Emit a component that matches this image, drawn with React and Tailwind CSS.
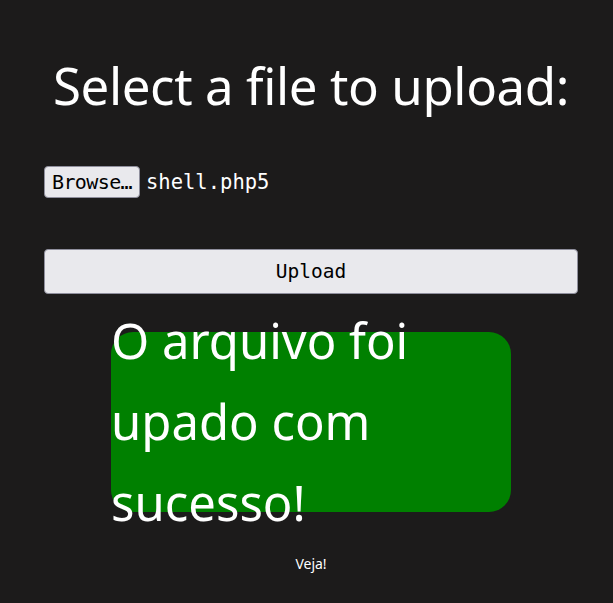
export default function App() {
  return (
    <div className="min-h-screen bg-[#1c1b1b] text-white font-['Noto_Sans',sans-serif] overflow-hidden">
      <div className="flex flex-col items-center pt-[54px] pl-[9px]">
        <h1 className="text-[51px] leading-[62px] tracking-[-0.4px] whitespace-nowrap">Select a file to upload:</h1>

        <div className="w-[534px] mt-[50px] flex flex-col">
          <div className="flex items-center gap-[6px] font-['DejaVu_Sans_Mono',monospace] text-[20px]">
            <button className="h-[32px] w-[96px] px-[4px] rounded-[4px] border border-[#8f8f9d] bg-[#e9e9ed] text-[#000] text-[20px] whitespace-nowrap overflow-hidden tracking-[-0.6px]">
              Browse…
            </button>
            <span className="text-[20.5px]">shell.php5</span>
          </div>

          <button className="mt-[51px] h-[45px] w-full rounded-[4px] border border-[#8f8f9d] bg-[#e9e9ed] text-black font-['DejaVu_Sans_Mono',monospace] text-[19.5px]">
            Upload
          </button>
        </div>

        <div className="mt-[38px] w-[400px] h-[180px] bg-[#008000] rounded-[22px]">
          <p className="-mt-[32px] text-[49px] leading-[81px] w-[330px]">O arquivo foi upado com sucesso!</p>
        </div>

        <p className="mt-[41px] text-[14px]">Veja!</p>
      </div>
    </div>
  );
}
